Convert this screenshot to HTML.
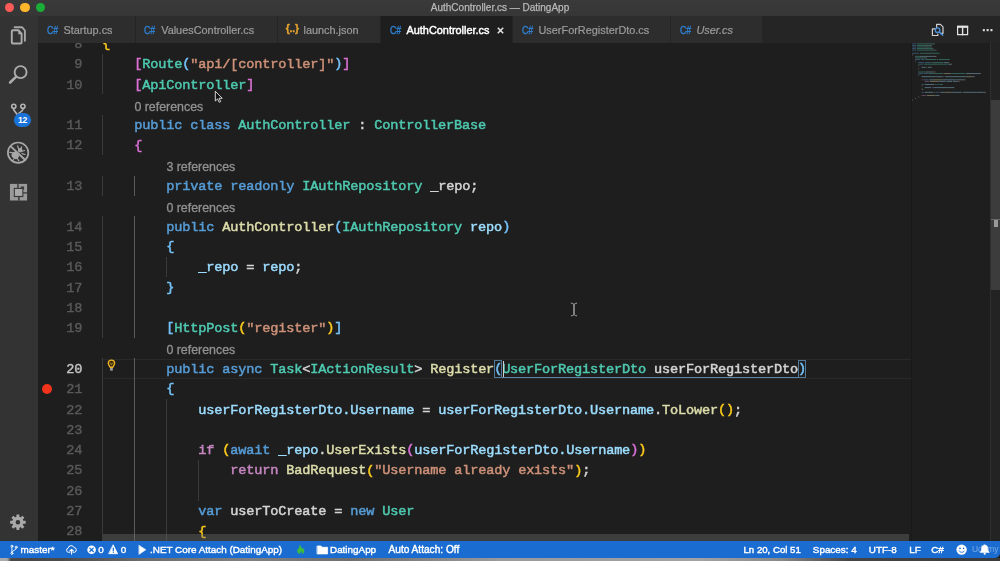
<!DOCTYPE html>
<html><head><meta charset="utf-8"><title>AuthController.cs — DatingApp</title>
<style>
*{margin:0;padding:0;box-sizing:border-box}
html,body{width:1000px;height:561px;overflow:hidden;background:#1e1e1e}
body{position:relative;font-family:"Liberation Sans",sans-serif;color:#ccc}
.abs{position:absolute}
#title{position:absolute;left:0;top:0;width:1000px;height:15.5px;background:linear-gradient(#3a3a3a,#363636)}
#title .t{will-change:transform;position:absolute;left:0;width:1000px;top:0;height:15.5px;line-height:15px;text-align:center;font-size:10px;color:#b8b8b8;-webkit-text-stroke:0.25px #b8b8b8}
.tl{position:absolute;top:2.6px;width:9.6px;height:9.6px;border-radius:50%}
#act{position:absolute;left:0;top:15.5px;width:38px;height:525.7px;background:#333333}
#tabs{will-change:transform;position:absolute;left:38px;top:15.5px;width:962px;height:27.4px;background:#252526}
.tab{position:absolute;top:0;height:27.4px;background:#2d2d2d;border-right:1px solid #252526;font-size:10.9px;line-height:28px;color:#9c9c9c;-webkit-text-stroke:0.2px #9c9c9c;white-space:nowrap}
.tab.on{background:#1e1e1e;color:#fff;-webkit-text-stroke:0.45px #fff}
.tab .ic{position:absolute;left:8.8px;top:0;font-size:11px;color:#2f80d2;-webkit-text-stroke:0.35px #2f80d2;transform:scaleX(0.8);transform-origin:0 50%}
.tab .nm{position:absolute;left:25.5px;top:0}
#ed{position:absolute;left:38px;top:42.9px;width:962px;height:498.3px;background:#1e1e1e;overflow:hidden}
#edin{will-change:transform;position:absolute;left:-38px;top:-42.9px;width:1000px;height:561px}
.ln{position:absolute;left:38px;width:44.3px;text-align:right;font:13.6px/20.3125px "Liberation Mono",monospace;letter-spacing:-0.16px;color:#5a5a5a;height:20.3125px;margin-top:1.5px;-webkit-text-stroke:0.4px currentColor}
.ln.cur{color:#c6c6c6}
.cl{position:absolute;white-space:pre;font:13.6px/20.3125px "Liberation Mono",monospace;letter-spacing:-0.16px;height:20.3125px;color:#d4d4d4;margin-top:1.5px;margin-left:-0.8px;-webkit-text-stroke:0.5px currentColor}
.cl b{font-weight:normal;position:relative;top:-0.8px}
.lens{position:absolute;white-space:pre;font:12.4px/20.3125px "Liberation Sans",sans-serif;height:20.3125px;color:#919191;margin-top:2.2px;margin-left:-0.6px;-webkit-text-stroke:0.3px currentColor}
.g{position:absolute;width:1px;height:20.3125px;background:#3a3a3a}
.g.ga{background:#5a5a5a}
#mini{position:absolute;left:911px;top:42.9px;width:78px;height:498.3px;background:#1e1e1e;border-left:1px solid #191919}
#sb{position:absolute;left:989.6px;top:42.9px;width:11px;height:498.3px;background:#232323;border-left:1px solid #303030}
#status{will-change:transform;position:absolute;left:0;top:541px;width:1000px;height:16.9px;border-bottom-right-radius:5px;background:#1a6cd1;font-size:9.9px;-webkit-text-stroke:0.4px #fff;color:#fff;line-height:17px;white-space:nowrap}
#status span{position:absolute;top:-0.4px}
#bot{position:absolute;left:0;top:557.8px;width:1000px;height:3.2px;background:linear-gradient(90deg,#aaa 0,#aaa 7px,#484848 11px,#4a4a4a 60px,#6e6e6e 150px,#808080 250px,#6e6e6e 350px,#9a9a9a 500px,#a2a2a2 700px,#888 780px,#444 850px,#3a3a3a 1000px)}
</style></head><body>
<div id="title">
<div class="tl" style="left:4.5px;background:#fc5b57"></div>
<div class="tl" style="left:20px;background:#fdb52c"></div>
<div class="tl" style="left:35.5px;background:#1aad37"></div>
<div class="t">AuthController.cs — DatingApp</div>
</div>
<div id="ed"><div id="edin">
<div class="abs" style="left:103px;top:359px;width:808px;height:19.7px;border-top:1px solid #292929;border-bottom:1px solid #292929"></div>
<div class="ln" style="top:33.39px">8</div>
<div class="cl" style="top:33.39px;left:103.0px"><b style="color:#fbc91c">{</b></div>
<div class="ln" style="top:53.70px">9</div>
<i class="g" style="left:102.3px;top:53.70px"></i>
<div class="cl" style="top:53.70px;left:135.0px"><b style="color:#da70d6">[</b><span style="color:#4ec9b0">Route</span><b style="color:#74c2f9">(</b><span style="color:#ce9178">"api/[controller]"</span><b style="color:#74c2f9">)</b><b style="color:#da70d6">]</b></div>
<div class="ln" style="top:74.01px">10</div>
<i class="g" style="left:102.3px;top:74.01px"></i>
<div class="cl" style="top:74.01px;left:135.0px"><b style="color:#da70d6">[</b><span style="color:#4ec9b0">ApiController</span><b style="color:#da70d6">]</b></div>
<div class="lens" style="top:94.33px;left:135.0px">0 references</div>
<div class="ln" style="top:114.64px">11</div>
<i class="g" style="left:102.3px;top:114.64px"></i>
<div class="cl" style="top:114.64px;left:135.0px"><span style="color:#569cd6">public class </span><span style="color:#4ec9b0">AuthController</span><span style="color:#d4d4d4"> : </span><span style="color:#4ec9b0">ControllerBase</span></div>
<div class="ln" style="top:134.95px">12</div>
<i class="g" style="left:102.3px;top:134.95px"></i>
<div class="cl" style="top:134.95px;left:135.0px"><b style="color:#da70d6">{</b></div>
<div class="lens" style="top:155.26px;left:167.0px">3 references</div>
<div class="ln" style="top:175.57px">13</div>
<i class="g" style="left:102.3px;top:175.57px"></i>
<i class="g ga" style="left:134.3px;top:175.57px"></i>
<div class="cl" style="top:175.57px;left:167.0px"><span style="color:#569cd6">private readonly </span><span style="color:#4ec9b0">IAuthRepository</span><span style="color:#d4d4d4"> _repo;</span></div>
<div class="lens" style="top:195.89px;left:167.0px">0 references</div>
<div class="ln" style="top:216.20px">14</div>
<i class="g" style="left:102.3px;top:216.20px"></i>
<i class="g ga" style="left:134.3px;top:216.20px"></i>
<div class="cl" style="top:216.20px;left:167.0px"><span style="color:#569cd6">public </span><span style="color:#dcdcaa">AuthController</span><b style="color:#74c2f9">(</b><span style="color:#4ec9b0">IAuthRepository</span><span style="color:#9cdcfe"> repo</span><b style="color:#74c2f9">)</b></div>
<div class="ln" style="top:236.51px">15</div>
<i class="g" style="left:102.3px;top:236.51px"></i>
<i class="g ga" style="left:134.3px;top:236.51px"></i>
<div class="cl" style="top:236.51px;left:167.0px"><b style="color:#74c2f9">{</b></div>
<div class="ln" style="top:256.82px">16</div>
<i class="g" style="left:102.3px;top:256.82px"></i>
<i class="g ga" style="left:134.3px;top:256.82px"></i>
<i class="g" style="left:166.3px;top:256.82px"></i>
<div class="cl" style="top:256.82px;left:199.0px"><span style="color:#9cdcfe">_repo</span><span style="color:#d4d4d4"> = </span><span style="color:#9cdcfe">repo</span><span style="color:#d4d4d4">;</span></div>
<div class="ln" style="top:277.14px">17</div>
<i class="g" style="left:102.3px;top:277.14px"></i>
<i class="g ga" style="left:134.3px;top:277.14px"></i>
<div class="cl" style="top:277.14px;left:167.0px"><b style="color:#74c2f9">}</b></div>
<div class="ln" style="top:297.45px">18</div>
<i class="g" style="left:102.3px;top:297.45px"></i>
<i class="g ga" style="left:134.3px;top:297.45px"></i>
<div class="ln" style="top:317.76px">19</div>
<i class="g" style="left:102.3px;top:317.76px"></i>
<i class="g ga" style="left:134.3px;top:317.76px"></i>
<div class="cl" style="top:317.76px;left:167.0px"><b style="color:#74c2f9">[</b><span style="color:#4ec9b0">HttpPost</span><b style="color:#fbc91c">(</b><span style="color:#ce9178">"register"</span><b style="color:#fbc91c">)</b><b style="color:#74c2f9">]</b></div>
<div class="lens" style="top:338.07px;left:167.0px">0 references</div>
<div class="ln cur" style="top:358.39px">20</div>
<i class="g" style="left:102.3px;top:358.39px"></i>
<i class="g ga" style="left:134.3px;top:358.39px"></i>
<div class="cl" style="top:358.39px;left:167.0px"><span style="color:#569cd6">public async </span><span style="color:#4ec9b0">Task</span><span style="color:#d4d4d4">&lt;</span><span style="color:#4ec9b0">IActionResult</span><span style="color:#d4d4d4">&gt; </span><span style="color:#dcdcaa">Register</span><b style="color:#74c2f9">(</b><span style="color:#4ec9b0">UserForRegisterDto</span><span style="color:#d4d4d4"> userForRegisterDto</span><b style="color:#74c2f9">)</b></div>
<div class="ln" style="top:378.70px">21</div>
<i class="g" style="left:102.3px;top:378.70px"></i>
<i class="g ga" style="left:134.3px;top:378.70px"></i>
<div class="cl" style="top:378.70px;left:167.0px"><b style="color:#74c2f9">{</b></div>
<div class="ln" style="top:399.01px">22</div>
<i class="g" style="left:102.3px;top:399.01px"></i>
<i class="g ga" style="left:134.3px;top:399.01px"></i>
<i class="g" style="left:166.3px;top:399.01px"></i>
<div class="cl" style="top:399.01px;left:199.0px"><span style="color:#9cdcfe">userForRegisterDto.Username</span><span style="color:#d4d4d4"> = </span><span style="color:#9cdcfe">userForRegisterDto.Username</span><span style="color:#d4d4d4">.</span><span style="color:#dcdcaa">ToLower</span><b style="color:#fbc91c">()</b><span style="color:#d4d4d4">;</span></div>
<div class="ln" style="top:419.32px">23</div>
<i class="g" style="left:102.3px;top:419.32px"></i>
<i class="g ga" style="left:134.3px;top:419.32px"></i>
<i class="g" style="left:166.3px;top:419.32px"></i>
<div class="ln" style="top:439.64px">24</div>
<i class="g" style="left:102.3px;top:439.64px"></i>
<i class="g ga" style="left:134.3px;top:439.64px"></i>
<i class="g" style="left:166.3px;top:439.64px"></i>
<div class="cl" style="top:439.64px;left:199.0px"><span style="color:#c586c0">if </span><b style="color:#fbc91c">(</b><span style="color:#569cd6">await </span><span style="color:#9cdcfe">_repo</span><span style="color:#d4d4d4">.</span><span style="color:#dcdcaa">UserExists</span><b style="color:#da70d6">(</b><span style="color:#9cdcfe">userForRegisterDto.Username</span><b style="color:#da70d6">)</b><b style="color:#fbc91c">)</b></div>
<div class="ln" style="top:459.95px">25</div>
<i class="g" style="left:102.3px;top:459.95px"></i>
<i class="g ga" style="left:134.3px;top:459.95px"></i>
<i class="g" style="left:166.3px;top:459.95px"></i>
<i class="g" style="left:198.3px;top:459.95px"></i>
<div class="cl" style="top:459.95px;left:231.0px"><span style="color:#c586c0">return </span><span style="color:#dcdcaa">BadRequest</span><b style="color:#fbc91c">(</b><span style="color:#ce9178">"Username already exists"</span><b style="color:#fbc91c">)</b><span style="color:#d4d4d4">;</span></div>
<div class="ln" style="top:480.26px">26</div>
<i class="g" style="left:102.3px;top:480.26px"></i>
<i class="g ga" style="left:134.3px;top:480.26px"></i>
<i class="g" style="left:166.3px;top:480.26px"></i>
<i class="g" style="left:198.3px;top:480.26px"></i>
<div class="ln" style="top:500.57px">27</div>
<i class="g" style="left:102.3px;top:500.57px"></i>
<i class="g ga" style="left:134.3px;top:500.57px"></i>
<i class="g" style="left:166.3px;top:500.57px"></i>
<div class="cl" style="top:500.57px;left:199.0px"><span style="color:#569cd6">var </span><span style="color:#d4d4d4">userToCreate = </span><span style="color:#569cd6">new </span><span style="color:#4ec9b0">User</span></div>
<div class="ln" style="top:520.89px">28</div>
<i class="g" style="left:102.3px;top:520.89px"></i>
<i class="g ga" style="left:134.3px;top:520.89px"></i>
<i class="g" style="left:166.3px;top:520.89px"></i>
<div class="cl" style="top:520.89px;left:199.0px"><b style="color:#fbc91c">{</b></div>
<!-- bracket match boxes + scope underline -->
<div class="abs" style="left:493.8px;top:360px;width:8.5px;height:17.5px;border:1px solid #527a98"></div>
<div class="abs" style="left:797.8px;top:360px;width:8.5px;height:17.5px;border:1px solid #527a98"></div>
<div class="abs" style="left:502.3px;top:376.5px;width:296px;height:1px;background:#5c86a8"></div>
<div class="abs" style="left:502.6px;top:360.5px;width:1.5px;height:16.5px;background:#d0d0d0"></div>
<!-- breakpoint -->
<div class="abs" style="left:42px;top:384px;width:10px;height:10px;border-radius:50%;background:#f1331b"></div>
<!-- lightbulb -->
<svg class="abs" style="left:105.55px;top:357.9px" width="10.9" height="13.6" viewBox="105 357 12 15"><path d="M111 359.3a3.5 3.5 0 0 0-3.5 3.5c0 1.6 1.4 2.4 2 4.4h3c0.6-2 2-2.8 2-4.4a3.5 3.5 0 0 0-3.5-3.500z" fill="#3a2c10" stroke="#f2b522" stroke-width="1.5" stroke-linejoin="round"/><path d="M109.6 362.2l1.4 2.2l1.4-2.2" fill="none" stroke="#c99a2a" stroke-width="0.9"/><rect x="109.5" y="367.9" width="3" height="3" fill="#a0a0a0"/></svg>
<!-- horizontal scrollbar -->
<div class="abs" style="left:103px;top:533.5px;width:805.5px;height:7.7px;background:rgba(112,112,112,0.38)"></div>
</div></div>
<div id="mini"></div>
<svg class="abs" style="left:911px;top:42.9px" width="79" height="100" viewBox="911 42.9 79 100"><g opacity="0.42"><rect x="912.2" y="43.30" width="3.9" height="0.95" fill="#569cd6"/><rect x="916.9" y="43.30" width="4.7" height="0.95" fill="#4ec9b0"/><rect x="921.6" y="43.30" width="0.8" height="0.95" fill="#d4d4d4"/><rect x="922.3" y="43.30" width="7.0" height="0.95" fill="#4ec9b0"/><rect x="929.4" y="43.30" width="0.8" height="0.95" fill="#d4d4d4"/><rect x="930.1" y="43.30" width="3.9" height="0.95" fill="#4ec9b0"/><rect x="934.0" y="43.30" width="0.8" height="0.95" fill="#d4d4d4"/><rect x="912.2" y="44.86" width="3.9" height="0.95" fill="#569cd6"/><rect x="916.9" y="44.86" width="7.0" height="0.95" fill="#4ec9b0"/><rect x="923.9" y="44.86" width="0.8" height="0.95" fill="#d4d4d4"/><rect x="924.7" y="44.86" width="2.3" height="0.95" fill="#4ec9b0"/><rect x="927.0" y="44.86" width="0.8" height="0.95" fill="#d4d4d4"/><rect x="927.8" y="44.86" width="3.1" height="0.95" fill="#4ec9b0"/><rect x="930.9" y="44.86" width="0.8" height="0.95" fill="#d4d4d4"/><rect x="912.2" y="46.42" width="3.9" height="0.95" fill="#569cd6"/><rect x="916.9" y="46.42" width="7.0" height="0.95" fill="#4ec9b0"/><rect x="923.9" y="46.42" width="0.8" height="0.95" fill="#d4d4d4"/><rect x="924.7" y="46.42" width="2.3" height="0.95" fill="#4ec9b0"/><rect x="927.0" y="46.42" width="0.8" height="0.95" fill="#d4d4d4"/><rect x="927.8" y="46.42" width="3.1" height="0.95" fill="#4ec9b0"/><rect x="930.9" y="46.42" width="0.8" height="0.95" fill="#d4d4d4"/><rect x="912.2" y="47.99" width="3.9" height="0.95" fill="#569cd6"/><rect x="916.9" y="47.99" width="7.0" height="0.95" fill="#4ec9b0"/><rect x="923.9" y="47.99" width="0.8" height="0.95" fill="#d4d4d4"/><rect x="924.7" y="47.99" width="2.3" height="0.95" fill="#4ec9b0"/><rect x="927.0" y="47.99" width="0.8" height="0.95" fill="#d4d4d4"/><rect x="927.8" y="47.99" width="4.7" height="0.95" fill="#4ec9b0"/><rect x="932.5" y="47.99" width="0.8" height="0.95" fill="#d4d4d4"/><rect x="912.2" y="49.55" width="3.9" height="0.95" fill="#569cd6"/><rect x="916.9" y="49.55" width="7.0" height="0.95" fill="#4ec9b0"/><rect x="923.9" y="49.55" width="0.8" height="0.95" fill="#d4d4d4"/><rect x="924.7" y="49.55" width="7.8" height="0.95" fill="#4ec9b0"/><rect x="932.5" y="49.55" width="0.8" height="0.95" fill="#d4d4d4"/><rect x="933.3" y="49.55" width="2.3" height="0.95" fill="#4ec9b0"/><rect x="935.6" y="49.55" width="0.8" height="0.95" fill="#d4d4d4"/><rect x="912.2" y="52.67" width="7.0" height="0.95" fill="#569cd6"/><rect x="920.0" y="52.67" width="7.0" height="0.95" fill="#4ec9b0"/><rect x="927.0" y="52.67" width="0.8" height="0.95" fill="#d4d4d4"/><rect x="927.8" y="52.67" width="2.3" height="0.95" fill="#4ec9b0"/><rect x="930.1" y="52.67" width="0.8" height="0.95" fill="#d4d4d4"/><rect x="930.9" y="52.67" width="8.6" height="0.95" fill="#4ec9b0"/><rect x="912.2" y="54.24" width="0.8" height="0.95" fill="#d4d4d4"/><rect x="915.3" y="55.80" width="0.8" height="0.95" fill="#d4d4d4"/><rect x="916.1" y="55.80" width="3.9" height="0.95" fill="#4ec9b0"/><rect x="920.0" y="55.80" width="1.6" height="0.95" fill="#d4d4d4"/><rect x="921.6" y="55.80" width="2.3" height="0.95" fill="#9cdcfe"/><rect x="923.9" y="55.80" width="1.6" height="0.95" fill="#d4d4d4"/><rect x="925.5" y="55.80" width="7.8" height="0.95" fill="#9cdcfe"/><rect x="933.3" y="55.80" width="3.1" height="0.95" fill="#d4d4d4"/><rect x="915.3" y="57.36" width="0.8" height="0.95" fill="#d4d4d4"/><rect x="916.1" y="57.36" width="10.1" height="0.95" fill="#4ec9b0"/><rect x="926.2" y="57.36" width="0.8" height="0.95" fill="#d4d4d4"/><rect x="915.3" y="58.92" width="4.7" height="0.95" fill="#569cd6"/><rect x="920.8" y="58.92" width="3.9" height="0.95" fill="#569cd6"/><rect x="925.5" y="58.92" width="10.9" height="0.95" fill="#4ec9b0"/><rect x="937.2" y="58.92" width="0.8" height="0.95" fill="#d4d4d4"/><rect x="938.7" y="58.92" width="10.9" height="0.95" fill="#4ec9b0"/><rect x="915.3" y="60.49" width="0.8" height="0.95" fill="#d4d4d4"/><rect x="918.4" y="62.05" width="5.5" height="0.95" fill="#569cd6"/><rect x="924.7" y="62.05" width="6.2" height="0.95" fill="#569cd6"/><rect x="931.7" y="62.05" width="11.7" height="0.95" fill="#4ec9b0"/><rect x="944.2" y="62.05" width="3.9" height="0.95" fill="#9cdcfe"/><rect x="948.1" y="62.05" width="0.8" height="0.95" fill="#d4d4d4"/><rect x="918.4" y="63.61" width="4.7" height="0.95" fill="#569cd6"/><rect x="923.9" y="63.61" width="10.9" height="0.95" fill="#4ec9b0"/><rect x="934.8" y="63.61" width="0.8" height="0.95" fill="#d4d4d4"/><rect x="935.6" y="63.61" width="11.7" height="0.95" fill="#4ec9b0"/><rect x="948.1" y="63.61" width="3.1" height="0.95" fill="#9cdcfe"/><rect x="951.2" y="63.61" width="0.8" height="0.95" fill="#d4d4d4"/><rect x="918.4" y="65.17" width="0.8" height="0.95" fill="#d4d4d4"/><rect x="921.6" y="66.74" width="3.9" height="0.95" fill="#9cdcfe"/><rect x="926.2" y="66.74" width="0.8" height="0.95" fill="#d4d4d4"/><rect x="927.8" y="66.74" width="3.1" height="0.95" fill="#9cdcfe"/><rect x="930.9" y="66.74" width="0.8" height="0.95" fill="#d4d4d4"/><rect x="918.4" y="68.30" width="0.8" height="0.95" fill="#d4d4d4"/><rect x="918.4" y="71.42" width="0.8" height="0.95" fill="#d4d4d4"/><rect x="919.2" y="71.42" width="6.2" height="0.95" fill="#4ec9b0"/><rect x="925.5" y="71.42" width="1.6" height="0.95" fill="#d4d4d4"/><rect x="927.0" y="71.42" width="6.2" height="0.95" fill="#9cdcfe"/><rect x="933.3" y="71.42" width="2.3" height="0.95" fill="#ce9178"/><rect x="918.4" y="72.99" width="4.7" height="0.95" fill="#569cd6"/><rect x="923.9" y="72.99" width="3.9" height="0.95" fill="#569cd6"/><rect x="928.6" y="72.99" width="3.1" height="0.95" fill="#4ec9b0"/><rect x="931.7" y="72.99" width="0.8" height="0.95" fill="#d4d4d4"/><rect x="932.5" y="72.99" width="10.1" height="0.95" fill="#4ec9b0"/><rect x="942.6" y="72.99" width="0.8" height="0.95" fill="#d4d4d4"/><rect x="944.2" y="72.99" width="6.2" height="0.95" fill="#dcdcaa"/><rect x="950.4" y="72.99" width="0.8" height="0.95" fill="#d4d4d4"/><rect x="951.2" y="72.99" width="14.0" height="0.95" fill="#4ec9b0"/><rect x="966.0" y="72.99" width="14.0" height="0.95" fill="#9cdcfe"/><rect x="980.1" y="72.99" width="0.8" height="0.95" fill="#d4d4d4"/><rect x="918.4" y="74.55" width="0.8" height="0.95" fill="#d4d4d4"/><rect x="921.6" y="76.11" width="14.0" height="0.95" fill="#9cdcfe"/><rect x="935.6" y="76.11" width="0.8" height="0.95" fill="#d4d4d4"/><rect x="936.4" y="76.11" width="6.2" height="0.95" fill="#9cdcfe"/><rect x="943.4" y="76.11" width="0.8" height="0.95" fill="#d4d4d4"/><rect x="945.0" y="76.11" width="14.0" height="0.95" fill="#9cdcfe"/><rect x="959.0" y="76.11" width="0.8" height="0.95" fill="#d4d4d4"/><rect x="959.8" y="76.11" width="6.2" height="0.95" fill="#9cdcfe"/><rect x="966.0" y="76.11" width="0.8" height="0.95" fill="#d4d4d4"/><rect x="966.8" y="76.11" width="5.5" height="0.95" fill="#dcdcaa"/><rect x="972.3" y="76.11" width="2.3" height="0.95" fill="#d4d4d4"/><rect x="921.6" y="79.24" width="1.6" height="0.95" fill="#c586c0"/><rect x="923.9" y="79.24" width="0.8" height="0.95" fill="#d4d4d4"/><rect x="924.7" y="79.24" width="3.9" height="0.95" fill="#569cd6"/><rect x="929.4" y="79.24" width="3.9" height="0.95" fill="#9cdcfe"/><rect x="933.3" y="79.24" width="0.8" height="0.95" fill="#d4d4d4"/><rect x="934.0" y="79.24" width="7.8" height="0.95" fill="#dcdcaa"/><rect x="941.8" y="79.24" width="0.8" height="0.95" fill="#d4d4d4"/><rect x="942.6" y="79.24" width="14.0" height="0.95" fill="#9cdcfe"/><rect x="956.7" y="79.24" width="0.8" height="0.95" fill="#d4d4d4"/><rect x="957.4" y="79.24" width="6.2" height="0.95" fill="#9cdcfe"/><rect x="963.7" y="79.24" width="1.6" height="0.95" fill="#d4d4d4"/><rect x="924.7" y="80.80" width="4.7" height="0.95" fill="#c586c0"/><rect x="930.1" y="80.80" width="7.8" height="0.95" fill="#dcdcaa"/><rect x="937.9" y="80.80" width="1.6" height="0.95" fill="#d4d4d4"/><rect x="939.5" y="80.80" width="6.2" height="0.95" fill="#9cdcfe"/><rect x="946.5" y="80.80" width="5.5" height="0.95" fill="#9cdcfe"/><rect x="952.8" y="80.80" width="4.7" height="0.95" fill="#9cdcfe"/><rect x="957.4" y="80.80" width="2.3" height="0.95" fill="#ce9178"/><rect x="921.6" y="83.92" width="2.3" height="0.95" fill="#569cd6"/><rect x="924.7" y="83.92" width="9.4" height="0.95" fill="#9cdcfe"/><rect x="934.8" y="83.92" width="0.8" height="0.95" fill="#d4d4d4"/><rect x="936.4" y="83.92" width="2.3" height="0.95" fill="#569cd6"/><rect x="939.5" y="83.92" width="3.1" height="0.95" fill="#4ec9b0"/><rect x="921.6" y="85.49" width="0.8" height="0.95" fill="#d4d4d4"/><rect x="924.7" y="87.05" width="6.2" height="0.95" fill="#9cdcfe"/><rect x="931.7" y="87.05" width="0.8" height="0.95" fill="#d4d4d4"/><rect x="933.3" y="87.05" width="14.0" height="0.95" fill="#9cdcfe"/><rect x="947.3" y="87.05" width="0.8" height="0.95" fill="#d4d4d4"/><rect x="948.1" y="87.05" width="6.2" height="0.95" fill="#9cdcfe"/><rect x="921.6" y="88.61" width="1.6" height="0.95" fill="#d4d4d4"/><rect x="921.6" y="91.74" width="2.3" height="0.95" fill="#569cd6"/><rect x="924.7" y="91.74" width="8.6" height="0.95" fill="#9cdcfe"/><rect x="934.0" y="91.74" width="0.8" height="0.95" fill="#d4d4d4"/><rect x="935.6" y="91.74" width="3.9" height="0.95" fill="#569cd6"/><rect x="940.3" y="91.74" width="3.9" height="0.95" fill="#9cdcfe"/><rect x="944.2" y="91.74" width="0.8" height="0.95" fill="#d4d4d4"/><rect x="945.0" y="91.74" width="6.2" height="0.95" fill="#dcdcaa"/><rect x="951.2" y="91.74" width="0.8" height="0.95" fill="#d4d4d4"/><rect x="952.0" y="91.74" width="9.4" height="0.95" fill="#9cdcfe"/><rect x="961.3" y="91.74" width="0.8" height="0.95" fill="#d4d4d4"/><rect x="962.9" y="91.74" width="14.0" height="0.95" fill="#9cdcfe"/><rect x="976.9" y="91.74" width="0.8" height="0.95" fill="#d4d4d4"/><rect x="977.7" y="91.74" width="6.2" height="0.95" fill="#9cdcfe"/><rect x="984.0" y="91.74" width="1.6" height="0.95" fill="#d4d4d4"/><rect x="921.6" y="94.86" width="4.7" height="0.95" fill="#c586c0"/><rect x="927.0" y="94.86" width="7.8" height="0.95" fill="#dcdcaa"/><rect x="934.8" y="94.86" width="0.8" height="0.95" fill="#d4d4d4"/><rect x="935.6" y="94.86" width="2.3" height="0.95" fill="#9cdcfe"/><rect x="937.9" y="94.86" width="1.6" height="0.95" fill="#d4d4d4"/><rect x="918.4" y="96.42" width="0.8" height="0.95" fill="#d4d4d4"/><rect x="915.3" y="97.99" width="0.8" height="0.95" fill="#d4d4d4"/><rect x="912.2" y="99.55" width="0.8" height="0.95" fill="#d4d4d4"/></g></svg>
<div id="sb">
<div class="abs" style="left:0;top:57.6px;width:11px;height:189.5px;background:#3c3c3c"></div>
<div class="abs" style="left:0;top:176.6px;width:11px;height:1px;background:#6a6a6a"></div>
<div class="abs" style="left:3.6px;top:177.2px;width:4px;height:7.4px;background:#9a9a9a"></div>
</div>
<div id="tabs">
<div class="tab" style="left:0;width:97.7px"><span class="ic">C#</span><span class="nm">Startup.cs</span></div>
<div class="tab" style="left:97.7px;width:142px"><span class="ic">C#</span><span class="nm">ValuesController.cs</span></div>
<div class="tab" style="left:239.7px;width:103.5px"><span class="ic" style="color:#e8a530;-webkit-text-stroke:0.3px #e8a530;font-size:10.4px;font-weight:bold;transform:none;left:8px;top:-0.6px;letter-spacing:-0.2px">{..}</span><span class="nm" style="left:25.8px">launch.json</span></div>
<div class="tab on" style="left:343px;width:132px"><span class="ic">C#</span><span class="nm">AuthController.cs</span><svg style="position:absolute;left:115.7px;top:10.6px" width="7" height="7" viewBox="0 0 7 7"><path d="M0.8 0.8l5.4 5.4M6.2 0.8l-5.4 5.4" stroke="#e6e6e6" stroke-width="1.5"/></svg></div>
<div class="tab" style="left:475px;width:158px"><span class="ic">C#</span><span class="nm">UserForRegisterDto.cs</span></div>
<div class="tab" style="left:633px;width:92px"><span class="ic">C#</span><span class="nm" style="font-style:italic">User.cs</span></div>
</div>
<div id="act">
<svg class="abs" style="left:0;top:0" width="38" height="526" viewBox="0 15.5 38 526" fill="none" stroke="#b4b4b4" stroke-width="1.5" stroke-linejoin="round" stroke-linecap="round">
<!-- files -->
<path d="M14.6 26.8h7.6l2.7 3.2v10.2" stroke-width="1.9" stroke="#a6a6a6"/>
<path d="M12.8 29.8h5.8l3 3.4v8.8a1 1 0 0 1-1 1h-7.8a1 1 0 0 1-1-1v-11.2a1 1 0 0 1 1-1z" stroke-width="1.9" stroke="#acacac"/>
<path d="M18.3 29.8v4h3.4z" fill="#acacac" stroke="none"/>
<!-- search -->
<circle cx="20.6" cy="71.6" r="6" stroke-width="1.9" stroke="#acacac"/>
<path d="M16 76.4L10.1 82" stroke-width="2.6" stroke="#acacac"/>
<!-- git -->
<circle cx="13.8" cy="105.8" r="2.1" stroke-width="1.6"/>
<circle cx="22.9" cy="105.8" r="2.1" stroke-width="1.6"/>
<path d="M13.8 108.4v1.2l3.4 4.4M22.9 108.4c0 2.6-2.4 2.6-4.2 4.6v3" stroke-width="1.7"/>
<!-- debug -->
<circle cx="18.1" cy="152.2" r="10.2" stroke-width="1.7" stroke="#a8a8a8"/>
<path d="M11 146.1L25.2 159.5" stroke-width="1.9" stroke="#a8a8a8"/>
<g stroke-width="1.2" stroke="#a8a8a8"><ellipse cx="15.2" cy="155" rx="2.7" ry="3.2" fill="#a8a8a8" transform="rotate(-45 15.2 155)"/>
<path d="M17.6 145.4l1 2.8M21.6 146.4l-0.8 2.2M24.6 150l-2.6 0.8M25 154l-3-0.8M12.4 152.2l-2.6-0.4M13.4 158.6l-0.6 2M17.4 158l1.4 2.4"/>
<circle cx="20.2" cy="149.8" r="1.7" fill="#a8a8a8"/></g>
<!-- extensions -->
<g stroke="none">
<rect x="9.95" y="183.4" width="17.15" height="16.6" fill="#9a9a9a"/>
<rect x="17.3" y="183.4" width="1.3" height="5" fill="#333"/>
<rect x="18.2" y="196" width="1.4" height="4" fill="#333"/>
<rect x="22.5" y="191.8" width="4.6" height="1.2" fill="#333"/>
<rect x="20.6" y="186" width="3.5" height="3" fill="#3c3c3c"/>
<rect x="13.8" y="187.4" width="9.6" height="9.2" fill="#3a3a3a"/>
<rect x="14.9" y="188.5" width="7.4" height="6.9" fill="#a9a9a9"/>
</g>
<!-- gear -->
<g transform="translate(17.9 521.7)" stroke="none" fill="#a9a9a9">
<path fill-rule="evenodd" d="M0-5.6a5.6 5.6 0 1 0 0 11.2a5.6 5.6 0 1 0 0-11.2zM0-2.3a2.3 2.3 0 1 1 0 4.6a2.3 2.3 0 1 1 0-4.6z"/>
<g id="teeth"><rect x="-1.45" y="-7.8" width="2.9" height="3.2" rx="0.4"/><rect x="-1.45" y="4.6" width="2.9" height="3.2" rx="0.4"/><rect x="-7.8" y="-1.45" width="3.2" height="2.9" rx="0.4"/><rect x="4.6" y="-1.45" width="3.2" height="2.9" rx="0.4"/></g>
<g transform="rotate(45)"><rect x="-1.45" y="-7.8" width="2.9" height="3.2" rx="0.4"/><rect x="-1.45" y="4.6" width="2.9" height="3.2" rx="0.4"/><rect x="-7.8" y="-1.45" width="3.2" height="2.9" rx="0.4"/><rect x="4.6" y="-1.45" width="3.2" height="2.9" rx="0.4"/></g>
</g>
</svg>
<div class="abs" style="left:13.8px;top:97.5px;width:17.4px;height:13.6px;border-radius:6.8px;background:#1a73d9;color:#fff;font-size:8.6px;font-weight:bold;line-height:14.4px;text-align:center;letter-spacing:-0.2px">12</div>
</div>
<div id="status">
<svg class="abs" style="left:0;top:0" width="1000" height="17" viewBox="0 541.2 1000 17" fill="none" stroke="#fff" stroke-width="1" stroke-linecap="round" stroke-linejoin="round">
<!-- branch -->
<circle cx="11.9" cy="546.4" r="1" stroke-width="0.9"/><circle cx="16.2" cy="547.4" r="1" stroke-width="0.9"/><circle cx="11.9" cy="553.6" r="1" stroke-width="0.9"/>
<path d="M11.9 547.5v5M16.2 548.5c0 2.3-4 1.8-4.3 4" stroke-width="0.9"/>
<!-- cloud upload -->
<g transform="translate(71.6 550) scale(0.86) translate(-71.6 -550.4)"><path d="M69.5 553.3h-1.6a2.4 2.4 0 0 1-0.4-4.7a3.6 3.6 0 0 1 6.9-0.8a2.8 2.8 0 0 1 0.6 5.5h-1.6" stroke-width="1.15"/>
<path d="M71.6 555.4v-5.2M69.6 551.8l2-2l2 2" stroke-width="1.25"/></g>
<!-- error -->
<circle cx="91.6" cy="550" r="4.3" fill="#fff" stroke="none"/>
<path d="M89.9 548.3l3.4 3.4M93.3 548.3l-3.4 3.4" stroke="#1a6cd1" stroke-width="1.3"/>
<!-- warning -->
<path d="M113.3 545.3l4.3 8.6h-8.6z" fill="#fff" stroke="#fff" stroke-width="0.8"/>
<path d="M113.3 548.2v3" stroke="#1a6cd1" stroke-width="1.2"/><circle cx="113.3" cy="552.7" r="0.6" fill="#1a6cd1" stroke="none"/>
<!-- play -->
<path d="M139.2 545.6l6.6 4.4l-6.6 4.4z" fill="#fff" stroke="#fff" stroke-width="0.6"/>
<!-- flame -->
<path d="M300 545.6c0.3 1.8 2.3 2.6 2.6 4.6c0.5-0.5 0.6-1.1 0.5-1.7c1.2 1.4 1.4 4.4-0.6 5.6c0.5-1.2-0.1-2.3-0.9-2.9c0 1-0.7 1.3-1 2.1c-0.4-0.8-0.2-1.6 0.1-2.4c-1.2 0.6-1.7 2-1.1 3.3c-2.2-0.9-2.8-3.6-1.3-5.3c0.1 0.6 0.3 1 0.7 1.3c-0.2-1.8 0.2-3.6 1-4.6z" fill="#3fbf3a" stroke="#3fbf3a" stroke-width="0.5"/>
<!-- folder -->
<path d="M317.4 546.2h3.6l1 1.3h5.6v6.6h-10.2z" fill="#fff" stroke="#fff" stroke-width="0.8"/>
<!-- smiley -->
<circle cx="961.6" cy="549.8" r="5.2" fill="#fff" stroke="none"/>
<circle cx="960" cy="548.6" r="0.8" fill="#1a6cd1" stroke="none"/><circle cx="963.6" cy="548.6" r="0.8" fill="#1a6cd1" stroke="none"/>
<path d="M959.2 551.2c1.2 1.8 4 1.8 5.2 0" stroke="#1a6cd1" stroke-width="0.9"/>
<!-- bell -->
<path d="M984.7 545.2c-2.1 0-3 1.6-3 3.4c0 2-0.8 3.2-1.6 4h9.2c-0.8-0.8-1.6-2-1.6-4c0-1.8-0.9-3.4-3-3.4z" fill="#fff" stroke="#fff" stroke-width="0.6"/>
<circle cx="984.7" cy="553.9" r="1.1" fill="#fff" stroke="none"/>
</svg>
<span style="left:20.5px">master*</span>
<span style="left:98.3px">0</span><span style="left:120.8px">0</span>
<span style="left:150px">.NET Core Attach (DatingApp)</span>
<span style="left:330px">DatingApp</span>
<span style="left:388.5px;font-size:10.15px">Auto Attach: Off</span>
<span style="left:743.5px;font-size:9.65px">Ln 20, Col 51</span>
<span style="left:812.8px">Spaces: 4</span>
<span style="left:868.8px">UTF-8</span>
<span style="left:909.2px">LF</span>
<span style="left:931.2px">C#</span>
<span style="left:972px;font-size:8.4px;color:rgba(255,255,255,0.4);-webkit-text-stroke:0">Udemy</span>
</div>
<svg class="abs" style="left:920px;top:15.5px" width="80" height="27.4" viewBox="920 15.5 80 27.4" fill="none" stroke="#d0d0d0" stroke-width="1.2" stroke-linejoin="round" stroke-linecap="round">
<path d="M936.6 26.8v-2.9h3.8l2.6 2.5v6.4h-2"/>
<path d="M935.4 28.4h-3v6.6h5.4v-1.4"/>
<circle cx="937.6" cy="29.7" r="2.3" stroke="#4a90d9" stroke-width="1.3"/>
<path d="M939.4 31.6l3.3 3.2" stroke="#4a90d9" stroke-width="1.5"/>
<rect x="957.6" y="26.2" width="10" height="8" stroke="#e4e4e4" stroke-width="1.2"/>
<path d="M957 26.2h11.2" stroke="#e4e4e4" stroke-width="2.2" stroke-linecap="butt"/>
<path d="M962.6 26v8.2" stroke="#e4e4e4" stroke-width="1.4"/>
<g fill="#d8d8d8" stroke="none"><rect x="982.8" y="28.6" width="2.1" height="2.1" rx="0.5"/><rect x="986.6" y="28.6" width="2.1" height="2.1" rx="0.5"/><rect x="990.4" y="28.6" width="2.1" height="2.1" rx="0.5"/></g>
</svg>
<!-- mouse pointer -->
<svg class="abs" style="left:213px;top:89px" width="12" height="15" viewBox="213 89 12 15"><path d="M215.3 91.2v9.8l2.3-2.1l1.6 3.4l1.5-0.7l-1.6-3.3h3.1z" fill="#111" stroke="#e8e8e8" stroke-width="0.9" stroke-linejoin="round"/></svg>
<!-- I-beam -->
<svg class="abs" style="left:569px;top:301px" width="10" height="17" viewBox="569 301 10 17" fill="none" stroke="#a0a0a0" stroke-width="1" stroke-linecap="round"><path d="M571.3 303.2c1.6 0 2.7 0.7 2.7 1.8c0-1.1 1.1-1.8 2.7-1.8M571.3 315.8c1.6 0 2.7-0.7 2.7-1.8c0 1.1 1.1 1.8 2.7 1.8"/><path d="M574 305v9" stroke-width="1.5"/></svg>
<div id="bot"></div>
</body></html>
